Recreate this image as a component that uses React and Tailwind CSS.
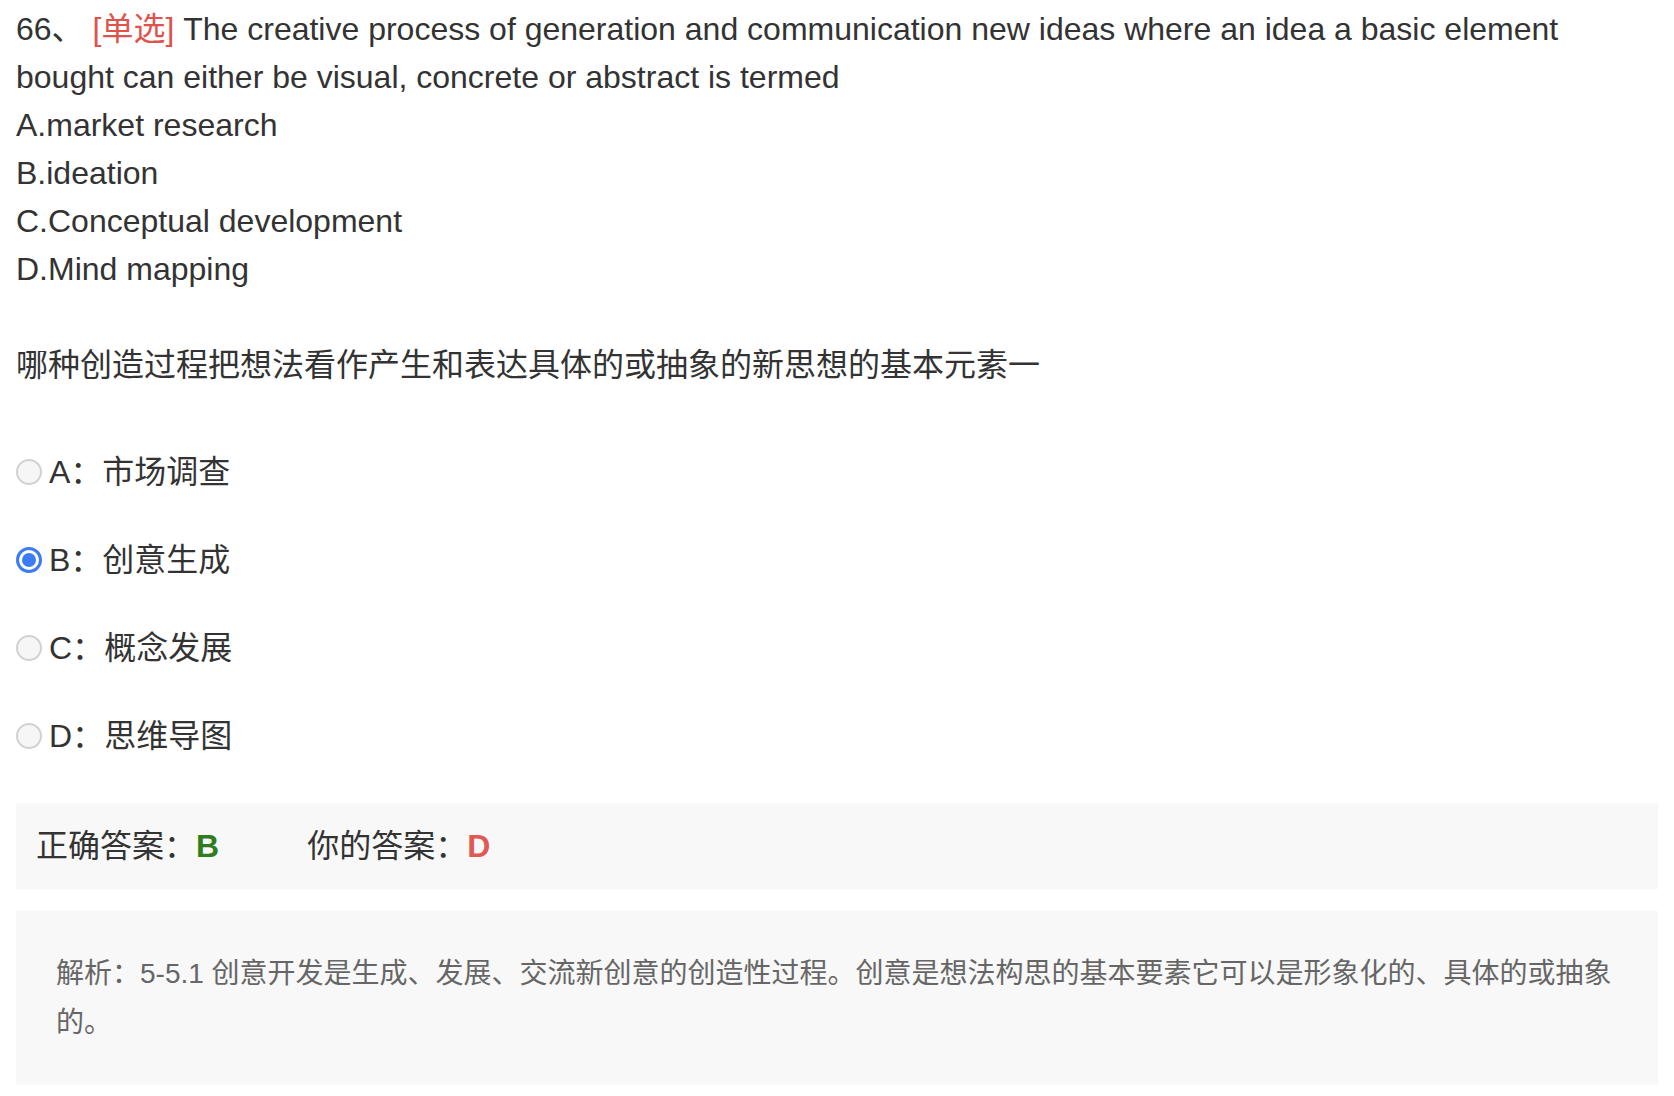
import React from 'react'

const options = [
  { key: 'A', text: '市场调查' },
  { key: 'B', text: '创意生成' },
  { key: 'C', text: '概念发展' },
  { key: 'D', text: '思维导图' }
]

const Radio = ({ checked }) =>
  checked ? (
    <span className="w-[26px] h-[26px] rounded-full border-[3px] border-[#3b7cf5] bg-white flex items-center justify-center shrink-0">
      <span className="w-[14px] h-[14px] rounded-full bg-[#3b7cf5]" />
    </span>
  ) : (
    <span className="w-[26px] h-[26px] rounded-full border-2 border-[#d2d2d2] bg-[#f6f6f6] shrink-0" />
  )

const App = () => {
  const selected = 'B'

  return (
    <div
      className="w-full min-h-screen bg-white text-[#333] px-[16px] pt-[5px]"
      style={{ fontFamily: '"Liberation Sans", "Noto Sans CJK SC", Arial, sans-serif' }}
    >
      {/* Question */}
      <div className="text-[32px] leading-[48px] pr-[2px]">
        <div>
          66、 <span className="text-[#e0524c]">[单选]</span> The creative process of generation and communication new ideas where an idea a basic element bought can either be visual, concrete or abstract is termed
        </div>
        <div>A.market research</div>
        <div>B.ideation</div>
        <div>C.Conceptual development</div>
        <div>D.Mind mapping</div>
      </div>

      <div className="mt-[48px] text-[32px] leading-[48px]">
        哪种创造过程把想法看作产生和表达具体的或抽象的新思想的基本元素一
      </div>

      {/* Options */}
      <div className="mt-[39px]">
        {options.map((opt) => (
          <div key={opt.key} className="h-[88px] flex items-center text-[32px] leading-[48px]">
            <Radio checked={opt.key === selected} />
            <span className="ml-[7px]">
              {opt.key}：{opt.text}
            </span>
          </div>
        ))}
      </div>

      {/* Answer */}
      <div className="mt-[23px] bg-[#f8f8f8] px-[20px] py-[19px] flex items-center text-[32px] leading-[48px]">
        <span>
          正确答案：<span className="font-bold text-[#2f7d1f]">B</span>
        </span>
        <span className="ml-[88px]">
          你的答案：<span className="font-bold text-[#e05a52]">D</span>
        </span>
      </div>

      {/* Analysis */}
      <div className="mt-[22px] bg-[#f8f8f8] px-[40px] py-[38px] text-[28px] leading-[49px] text-[#666]">
        解析：5-5.1 创意开发是生成、发展、交流新创意的创造性过程。创意是想法构思的基本要素它可以是形象化的、具体的或抽象的。
      </div>
    </div>
  )
}

export default App
